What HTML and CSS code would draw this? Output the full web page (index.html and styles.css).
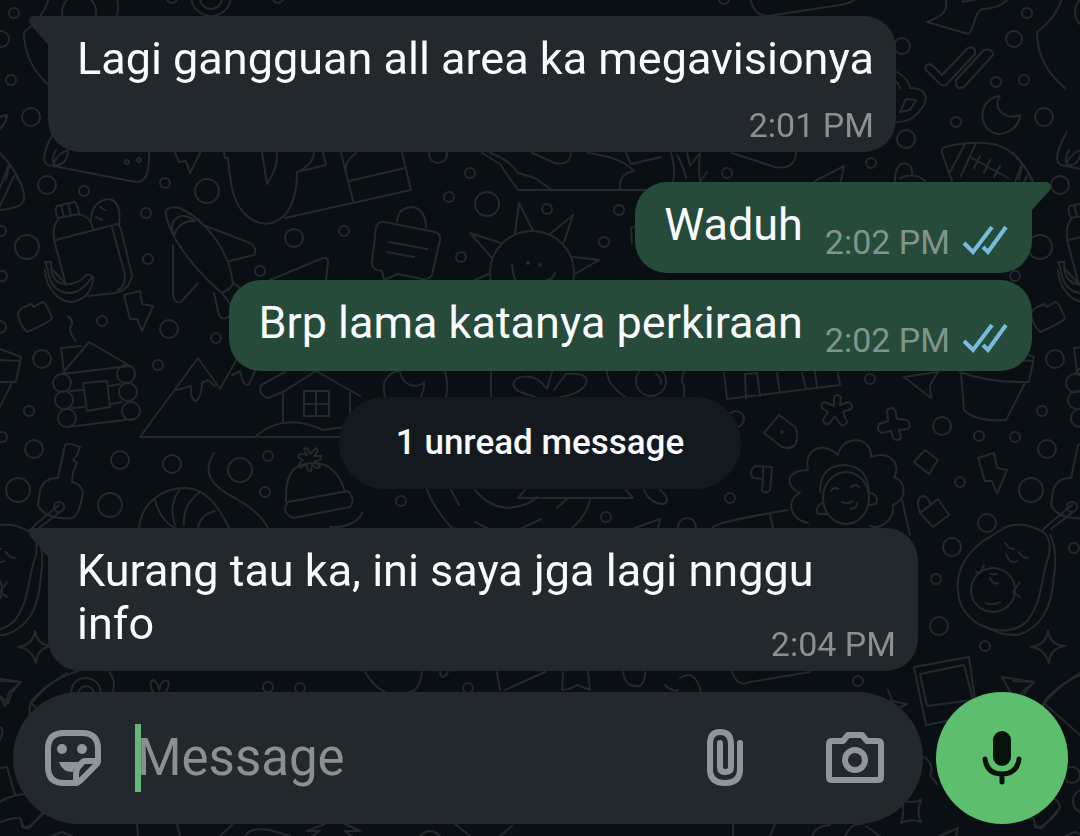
FILE: index.html
```html
<!DOCTYPE html>
<html lang="id">
<head>
  <meta charset="UTF-8">
  <meta name="viewport" content="width=device-width, initial-scale=1.0">
  <title>Chat</title>
  <link rel="stylesheet" href="styles.css">
</head>
<body>
  <svg class="wallpaper" viewBox="0 0 1080 836" preserveAspectRatio="xMinYMin slice" aria-hidden="true">
    <defs>
      <g id="doodles">
        <!-- bubbles -->
        <g>
          <circle cx="14" cy="13" r="5"/><circle cx="1" cy="39" r="8"/><circle cx="11" cy="80" r="5"/>
          <circle cx="31" cy="117" r="9"/><circle cx="47" cy="185" r="9"/><circle cx="84" cy="191" r="5"/>
          <circle cx="27" cy="247" r="12"/><circle cx="165" cy="183" r="5"/><circle cx="207" cy="191" r="12"/>
          <circle cx="146" cy="213" r="5"/><circle cx="148" cy="259" r="5"/><circle cx="294" cy="238" r="9"/>
          <circle cx="344" cy="231" r="5"/><circle cx="260" cy="271" r="5"/><circle cx="172" cy="-2" r="5"/>
          <circle cx="1" cy="231" r="5"/><circle cx="2" cy="276" r="5"/><circle cx="211" cy="-4" r="20"/>
          <circle cx="211" cy="-2" r="11"/><circle cx="278" cy="-2" r="5"/><circle cx="438" cy="154" r="9"/>
          <circle cx="470" cy="173" r="5"/><circle cx="449" cy="197" r="5"/><circle cx="487" cy="204" r="12"/>
          <circle cx="547" cy="209" r="5"/><circle cx="619" cy="210" r="5"/><circle cx="604" cy="242" r="5"/>
          <circle cx="461" cy="257" r="5"/><circle cx="724" cy="-1" r="5"/><circle cx="996" cy="82" r="5"/>
          <circle cx="902" cy="46" r="8"/><circle cx="906" cy="139" r="9"/><circle cx="956" cy="122" r="5"/>
          <circle cx="871" cy="163" r="5"/><circle cx="727" cy="173" r="5"/><circle cx="0" cy="327" r="6"/>
          <circle cx="42" cy="359" r="9"/><circle cx="102" cy="321" r="5"/><circle cx="169" cy="329" r="9"/>
          <circle cx="216" cy="338" r="5"/><circle cx="158" cy="365" r="5"/><circle cx="29" cy="411" r="5"/>
          <circle cx="34" cy="449" r="9"/><circle cx="2" cy="437" r="5"/><circle cx="18" cy="490" r="12"/>
          <circle cx="120" cy="460" r="9"/><circle cx="172" cy="464" r="9"/><circle cx="110" cy="505" r="12"/>
          <circle cx="240" cy="470" r="12"/><circle cx="268" cy="456" r="5"/><circle cx="265" cy="492" r="5"/>
          <circle cx="401" cy="501" r="5"/><circle cx="606" cy="517" r="5"/><circle cx="730" cy="498" r="5"/>
          <circle cx="687" cy="527" r="9"/><circle cx="736" cy="419" r="8"/><circle cx="870" cy="379" r="5"/>
          <circle cx="942" cy="426" r="9"/><circle cx="979" cy="436" r="5"/><circle cx="960" cy="482" r="5"/>
          <circle cx="987" cy="523" r="9"/><circle cx="952" cy="547" r="9"/><circle cx="936" cy="579" r="5"/>
          <circle cx="939" cy="626" r="9"/><circle cx="985" cy="646" r="5"/><circle cx="858" cy="681" r="5"/>
          <circle cx="1074" cy="548" r="5"/><circle cx="268" cy="687" r="5"/><circle cx="300" cy="688" r="5"/>
          <circle cx="468" cy="688" r="5"/><circle cx="1072" cy="775" r="8"/><circle cx="1085" cy="801" r="12"/>
        </g>
        <!-- balloon, cheese, pizza -->
        <path d="M50-5Q44 18 24 32Q24 65 52 88M117-2Q119 8 117 16"/>
        <circle cx="79" cy="12" r="17"/>
        <path d="M54 132Q38 160 48 165L136 182Q150 183 149 153M56 150Q50 160 55 166Q68 164 68 150Q60 152 54 162"/>
        <circle cx="127" cy="162" r="2"/><circle cx="139" cy="160" r="2"/>
        <path d="M0 153Q25 180 24 200Q22 208 0 210M0 188L8 166M0 206L14 176M0 117L7 115Q6 124 0 129"/>
        <path d="M175 153L179 162L186 161L190 173L200 153"/>
        <!-- mug and book -->
        <path d="M224 153L225 158L228 158C230 180 232 200 243 212Q264 234 285 215Q297 200 297 172L326 165L323 153M262 153L267 184Q278 168 277 153M297 172Q313 165 314 153"/>
        <path d="M285 218L411 190L402 153M341 153L353 201M349 181L405 168M346 170Q344 162 356 153"/>
        <!-- bottle and bread -->
        <path d="M57 206L74 202Q78 203 79 214L58 218Q54 210 57 206ZM61 205L64 217M68 203L71 216M59 218C54 225 53 228 54 240L66 285M56 240L117 224Q120 225 121 230L132 275Q130 290 115 293L88 296M112 227L125 275Q125 287 118 290M78 214Q90 216 92 226L94 230M91 220Q92 200 110 199Q122 203 119 225M100 207L105 210M96 217L102 220"/>
        <!-- banana -->
        <path d="M45 270C46 290 60 302 72 302C85 300 93 290 93 277Q88 271 82 279Q70 287 60 283Q50 278 51 262H45L48 270M48 272Q52 294 72 293Q84 290 92 277M51 268L64 282"/>
        <!-- rocket -->
        <path d="M166 215C164 208 172 206 180 208C205 220 230 250 233 285Q228 290 222 293C200 275 170 240 166 215M174 235Q168 224 178 217Q186 214 195 221Q180 220 174 235M173 245V295Q175 304 181 302L198 283M206 226L250 243Q258 248 254 255L229 261M214 293L219 315Q224 322 230 315L236 308M222 293L235 310M228 290L234 283L245 293"/>
        <path d="M270 280L323 258Q328 257 328 262L326 280"/>
        <!-- chat note -->
        <path d="M384 222L435 232Q441 234 440 240L432 275Q429 280 422 279L398 274L384 280L382 271Q371 270 372 262L376 228Q378 221 384 222M397 222Q398 207 413 207Q426 210 426 228M389 242L427 249M387 252L414 257"/>
        <!-- sun -->
        <circle cx="532" cy="273" r="42"/>
        <circle cx="528" cy="263" r="1"/><circle cx="540" cy="265" r="1"/>
        <path d="M515 233L519 203L533 231M549 235L573 215L564 242M573 257L599 260L575 274M492 258L470 233L501 243M489 274L475 280M512 264Q513 290 532 286M555 273Q552 280 547 280"/>
        <!-- shoreline and grass -->
        <path d="M482 153L500 164L506 173L518 190H648M490 153Q510 160 518 173L535 178L552 190M532 153L555 163Q570 166 571 153M588 153Q602 155 612 158Q625 162 634 171Q618 174 620 190M626 153L631 164L661 157M671 153Q676 170 673 182M677 155Q685 170 686 178M687 153L690 166L700 153Q698 170 700 182L707 172M632 244L631 228L637 226"/>
        <!-- top right: bat, star, ticks, moon -->
        <path d="M750-2Q754 16 768 16L840 5Q856 2 853-2M945-5C950 12 942 16 927 22L968 34C975 30 973 12 983 9Q1000 8 1007 0M963-2V2L978-1"/>
        <path d="M926 70Q924 62 932 65L942 75L968 48Q976 46 975 54L946 85Q943 86 940 84ZM956 80L984 50Q993 48 993 55L964 87Q955 91 956 80Z"/>
        <path d="M1000 96C978 98 976 130 998 134C1012 134 1020 122 1020 115Q1005 120 998 108Q996 102 1000 96Z"/>
        <path d="M897 72Q910 80 910 88C925 88 930 97 922 108Q912 122 897 122M900 112L906 99L916 100L910 110ZM897 82L900 88"/>
        <!-- rugby ball -->
        <path d="M942 153Q940 148 948 146C990 138 1015 142 1032 181M942 153L952 181M965 144L950 172M976 143L961 176M1022 165L1019 180M972 158L1008 178M980 156L974 168M990 160L984 173M1000 166L994 177"/>
        <path d="M732 153L775 167Q795 170 796 153M815 181L844 166L841 181M895 181Q895 164 905 163Q913 165 912 175M900 178Q915 172 925 181"/>
        <!-- brick, bolt -->
        <path d="M22 308L31 304L34 307L42 302Q46 302 52 318Q50 322 27 332Q18 322 18 313ZM124 295L140 291L142 304L153 306L142 331L137 319L130 319Z"/>
        <!-- log cabin -->
        <circle cx="62" cy="383" r="9"/><circle cx="64" cy="400" r="9"/><circle cx="67" cy="418" r="9"/>
        <circle cx="126" cy="374" r="9"/><circle cx="128" cy="392" r="9"/><circle cx="131" cy="411" r="9"/>
        <path d="M68 316Q75 322 70 328Q70 335 76 341M62 374L89 342L130 366ZM64 372L61 348L81 346M70 391L83 390M72 408L84 407M109 386L120 384M110 404L122 402M67 427L133 419M83 383L107 381L110 407L87 411Z"/>
        <!-- mountains and lodge -->
        <path d="M340 437H140L198 358L220 389L242 350M176 390L191 386Q190 400 196 401Q202 396 202 383L208 380L215 386M232 375L240 371Q243 388 249 384L255 371"/>
        <path d="M283 393V422M350 393V415M316 371L283 392L268 398Q258 395 261 385L285 372M316 371L360 396M304 391H329V416H304ZM316 391V416M304 404H329M256 436Q285 412 323 430L345 427"/>
        <!-- key -->
        <circle cx="59" cy="507" r="5"/>
        <path d="M58 478L65 445Q68 442 80 447L77 455L73 460L77 463L73 472L72 482Q80 483 83 492Q80 515 72 518Q45 520 38 505L40 490Q45 477 58 478M59 505L36 524L30 530M60 512L38 529"/>
        <!-- croissant and hat -->
        <path d="M139 528C142 500 165 488 185 488C205 488 218 505 229 528M155 500Q160 520 175 528M180 489Q168 505 175 525M200 492Q182 505 184 525M215 511Q200 515 198 528M214 453C200 475 215 488 235 498Q260 512 268 528"/>
        <path d="M286 502C285 480 290 466 305 464Q335 458 345 492M288 502L348 491Q356 500 350 507L293 518Q280 512 288 502ZM307 455L304 449Q308 446 310 454L316 448Q320 451 314 456L321 456Q322 461 315 461L320 467Q316 470 312 464L311 471Q306 471 307 464L300 468Q297 464 303 460L298 457Q299 452 307 455M330 527Q355 528 362 513"/>
        <!-- around the notice -->
        <path d="M385 396C380 380 390 372 400 371C402 388 420 388 424 382Q424 392 420 398M445 372Q449 385 446 397M491 372V397M547 389Q535 372 518 378Q508 385 520 392L535 397M547 389L552 372M554 390L566 374Q590 372 586 384Q580 394 560 397M607 372Q607 384 625 397M684 372Q680 380 684 386V397M656 374Q662 378 661 384"/>
        <circle cx="651" cy="381" r="15"/>
        <path d="M427 490Q435 510 452 528M451 490L459 505M475 490Q490 508 510 508Q530 505 537 497M525 490L518 498H633L626 490M567 499L557 508M590 500Q585 518 572 528M475 522L487 528M522 528L541 519M644 490Q650 504 664 504Q672 500 660 490M635 528L660 519L658 528M712 528Q715 522 788 510M770 514L773 528M902 500L910 535"/>
        <!-- building, plane, pot -->
        <path d="M724 373L727 399L840 385L838 373M746 399L745 374L757 373L760 396M777 373L780 393M802 373L806 389M815 372L817 387M904 377L931 398L930 385L938 372ZM961 373L964 410Q975 422 1006 420L1025 383M955 352L1013 349L1034 357L1029 382Q990 383 960 372M1013 360L1033 361"/>
        <!-- asterisk, plus, tag, bolt, hammer -->
        <path d="M834 397Q837 393 841 397L840 405L848 402Q854 404 851 409L843 412L847 422Q844 428 840 424L835 416L829 424Q824 425 823 420L828 412L822 408Q820 403 825 402L834 406ZM887 410Q892 406 895 410L897 419L907 420Q912 424 908 429L899 430L901 438Q897 442 893 438L891 431L881 433Q876 429 879 424L888 421Z"/>
        <path d="M764 433L779 415L795 427Q800 435 795 445Q790 450 782 447ZM925 450L938 460L929 474L914 462ZM978 458L994 453L997 468L1007 470L997 494L992 481H985Z"/>
        <path d="M772 467L755 466Q748 472 753 478L763 479L762 490Q766 495 770 490ZM763 467V479"/>
        <circle cx="782" cy="432" r="1"/>
        <path d="M920 513L938 499L949 515L933 527ZM920 512Q915 500 922 496Q928 496 930 503"/>
        <!-- curly portrait -->
        <path d="M808 523C790 520 785 500 800 493C783 485 787 470 808 470C803 450 822 440 838 455C842 435 872 435 871 457C890 450 902 465 894 477C907 482 907 500 893 505C895 520 880 530 870 526"/>
        <ellipse cx="846" cy="498" rx="23" ry="26"/>
        <path d="M820 492Q820 465 845 465Q868 467 869 492M822 503Q814 508 818 514L826 514M868 492Q880 495 876 504L868 505M831 491Q834 486 838 489M851 487Q856 483 859 487M842 502Q848 505 852 501M851 509Q857 508 857 503"/>
        <!-- avocado -->
        <circle cx="993" cy="590" r="22"/>
        <path d="M983 541C1000 532 1006 522 1025 525C1045 530 1052 535 1049 555C1040 580 1043 600 1028 620C1010 640 970 630 960 602C952 575 965 555 983 541M1050 535Q1058 550 1054 575C1052 610 1040 628 1018 635Q1000 636 985 626M1005 543L1009 548L1014 549M1006 554Q1010 565 1017 561M1019 552Q1022 558 1028 558M990 578Q993 585 998 583M986 603Q993 606 1000 602M991 574H997M976 572L980 573L984 565M1020 582L1013 592L1020 597"/>
        <!-- sparkles, picture frame -->
        <path d="M1048 631Q1050 645 1065 646Q1050 648 1049 663Q1044 648 1031 647Q1046 645 1048 631ZM902 800Q912 804 921 800Q916 812 921 822Q911 818 901 823Q905 812 902 800ZM888 690L892 701L907 704L895 710"/>
        <path d="M914 667L969 657L977 715L926 725ZM920 674L964 665L973 700L927 706ZM1002 677L1034 682L1022 692L1018 706ZM1045 702Q1060 685 1080 673M1045 704L1080 735M924 757Q935 765 930 775L937 784M1060 773L1050 790M1035 823Q1037 830 1042 828L1060 808Q1060 800 1050 797"/>
        <!-- around the composer -->
        <path d="M0 681L21 682L12 692L8 703L0 696M30 715Q28 703 35 697Q50 680 78 671M109 672Q116 680 113 692M71 694Q72 678 86 678Q100 679 101 694M78 694Q80 686 86 686Q94 687 94 694M153 692Q148 682 153 680Q158 682 159 690Q162 678 168 681Q170 685 166 692"/>
        <path d="M0 727Q5 730 0 740M0 768L7 767L15 795M0 822Q18 816 21 819L22 827Q28 830 44 813M0 802Q8 796 24 794M52 836L62 832L72 836M137 824L138 836M177 824L180 836M220 836L232 825M245 836Q250 827 270 830L290 836M325 824L307 831H320L312 836M345 824L360 831H345L352 836"/>
        <path d="M365 672Q385 705 415 690Q422 680 422 672M440 672Q442 682 448 672M497 672L500 690M505 690L545 672M563 672L562 690Q570 690 577 685L590 690L588 672M623 672Q625 688 640 686Q646 680 645 672M665 685Q672 692 678 690M680 678Q695 668 701 692M732 672Q738 688 750 682L810 672"/>
        <path d="M420 836Q430 826 440 836M455 824L470 836M500 836L512 826M733 824V836M775 824L770 836M812 836Q815 826 830 825M845 836Q852 822 862 824M866 826L880 836M940 836L958 828L956 836"/>
      </g>
    </defs>
    <use href="#doodles"/>
    <use href="#doodles" x="-1013"/>
    <use href="#doodles" x="1013"/>
  </svg>

  <main class="chat">
    <article class="bubble bubble-in has-tail">
      <p>Lagi gangguan all area ka megavisionya</p>
      <div class="meta"><time>2:01 PM</time></div>
    </article>

    <article class="bubble bubble-out has-tail">
      <p>Waduh</p>
      <div class="meta">
        <time>2:02 PM</time>
        <svg class="ticks" viewBox="0 0 46 30" role="img" aria-label="Read"><path d="M2 18L11 27L30 2M21 22L26 27L44 2"/></svg>
      </div>
    </article>

    <article class="bubble bubble-out">
      <p>Brp lama katanya perkiraan</p>
      <div class="meta">
        <time>2:02 PM</time>
        <svg class="ticks" viewBox="0 0 46 30" role="img" aria-label="Read"><path d="M2 18L11 27L30 2M21 22L26 27L44 2"/></svg>
      </div>
    </article>

    <div class="unread">1 unread message</div>

    <article class="bubble bubble-in has-tail wrapped">
      <p>Kurang tau ka, ini saya jga lagi nnggu info <time class="meta">2:04 PM</time></p>
    </article>
  </main>

  <form class="composer">
    <div class="field">
      <button type="button" class="icon" aria-label="Stickers">
        <svg width="58" height="58" viewBox="0 0 58 58">
          <path class="line" d="M20 4H38Q54 4 54 20V32Q54 34 52 36L36 52Q34 54 32 54H20Q4 54 4 38V20Q4 4 20 4Z"/>
          <path class="line" d="M32 54V46Q32 39 37 35Q38 32 42 32H53"/>
          <circle cx="18" cy="20" r="5"/><circle cx="38" cy="20" r="5"/>
          <path d="M15 33H37Q30 36 29 43Q18 43 15 33Z"/>
        </svg>
      </button>
      <span class="caret"></span>
      <input type="text" placeholder="Message" aria-label="Message">
      <button type="button" class="icon" aria-label="Attach">
        <svg width="38" height="58" viewBox="0 0 38 58">
          <path class="line" d="M34 14V40Q34 54 19 54Q4 54 4 40V15Q4 3 14 3Q25 3 25 15V38Q25 43 19 43Q14 43 14 38V14"/>
        </svg>
      </button>
      <button type="button" class="icon camera" aria-label="Camera">
        <svg width="58" height="52" viewBox="0 0 58 52">
          <path class="line" d="M6 9H17L22 3H36L41 9H52Q55 9 55 12V45Q55 48 52 48H6Q3 48 3 45V12Q3 9 6 9Z"/>
          <circle class="line" cx="29" cy="28" r="10"/>
        </svg>
      </button>
    </div>
    <button type="button" class="mic" aria-label="Record voice message">
      <svg width="40" height="56" viewBox="0 0 40 56">
        <rect x="11" y="1" width="18" height="35" rx="9"/>
        <path class="line" d="M3 29Q5 44 20 44Q35 44 37 29M20 44V52"/>
      </svg>
    </button>
  </form>
</body>
</html>
```

FILE: styles.css
```css
* {
  box-sizing: border-box;
}

body {
  display: flex;
  flex-direction: column;
  min-height: 100vh;
  margin: 0;
  background: #0a0f13;
  color: #f8fafd;
  font-family: Roboto, sans-serif;
  font-size: 45px;
  line-height: 53px;
}

p {
  margin: 0;
}

.wallpaper {
  position: fixed;
  inset: 0;
  z-index: -1;
  width: 100%;
  height: 100%;
  fill: none;
  stroke: #24292d;
  stroke-width: 2;
  stroke-linecap: round;
  stroke-linejoin: round;
}

.chat {
  flex: 1;
  display: flex;
  flex-direction: column;
  padding: 16px 48px 20px;
}

.bubble {
  position: relative;
  max-width: 870px;
  padding: 16px 22px 7px 29px;
  border-radius: 32px;
}

.bubble-in {
  align-self: flex-start;
  background: #23282c;
}

.bubble-out {
  display: flex;
  align-items: flex-end;
  align-self: flex-end;
  gap: 22px;
  margin-top: 7px;
  padding-right: 24px;
  background: #264b3a;

  p {
    margin-bottom: 15px;
  }

  .meta {
    margin: 0 0 4px;
    color: #7f958b;
  }
}

.bubble-in + .bubble-out {
  margin-top: 30px;
}

/* little corner that sticks out of the first bubble of a run */
.has-tail::before {
  content: "";
  position: absolute;
  top: 0;
  width: 20px;
  height: 30px;
  background: inherit;
}

.bubble-in.has-tail {
  border-top-left-radius: 0;
}

.bubble-in.has-tail::before {
  left: -19px;
  clip-path: path("M20 0H4Q-2 2 1 8L20 30Z");
}

.bubble-out.has-tail {
  border-top-right-radius: 0;
}

.bubble-out.has-tail::before {
  right: -19px;
  clip-path: path("M0 0H16Q22 2 19 8L0 29Z");
}

.meta {
  display: flex;
  justify-content: flex-end;
  align-items: center;
  gap: 12px;
  margin-top: 20px;
  color: #8a8f92;
  font-size: 34px;
  line-height: 40px;
  white-space: nowrap;
}

/* time shares the last line of a long message */
.wrapped p {
  display: flow-root;
}

.wrapped .meta {
  float: right;
  margin-top: 27px;
}

.ticks {
  width: 46px;
  height: 30px;
  margin-bottom: 4px;
  fill: none;
  stroke: #76bcd9;
  stroke-width: 4;
}

.unread {
  align-self: center;
  margin: 26px 0 39px;
  padding: 20px 57px;
  border-radius: 46px;
  background: #13191d;
  font-size: 35px;
  font-weight: 500;
  line-height: 52px;
}

.composer {
  display: flex;
  align-items: center;
  gap: 13px;
  padding: 0 12px 12px 13px;

  button {
    display: flex;
    padding: 0;
    border: 0;
    background: none;
    cursor: pointer;
  }

  svg {
    fill: #8f9599;
  }

  .line {
    fill: none;
    stroke: #8f9599;
    stroke-width: 6;
    stroke-linecap: round;
    stroke-linejoin: round;
  }
}

.field {
  flex: 1;
  display: flex;
  align-items: center;
  min-width: 0;
  height: 132px;
  padding: 0 39px 0 31px;
  border-radius: 66px;
  background: #23282c;

  input {
    flex: 1;
    min-width: 0;
    padding: 0 0 0 2px;
    border: 0;
    outline: 0;
    background: none;
    color: #f8fafd;
    caret-color: #64b778;
    font: inherit;
    font-size: 51px;
    line-height: 64px;
  }

  input::placeholder {
    color: #8a8f92;
    opacity: 1;
  }
}

.caret {
  width: 6px;
  height: 68px;
  margin: 0 -6px 0 33px;
  background: #64b778;
}

.camera {
  margin-left: 82px;
}

.composer .mic {
  justify-content: center;
  align-items: center;
  width: 132px;
  height: 132px;
  border-radius: 50%;
  background: #5dbe6e;

  svg {
    fill: #08130c;
  }

  .line {
    stroke: #08130c;
    stroke-width: 5;
  }
}
```
